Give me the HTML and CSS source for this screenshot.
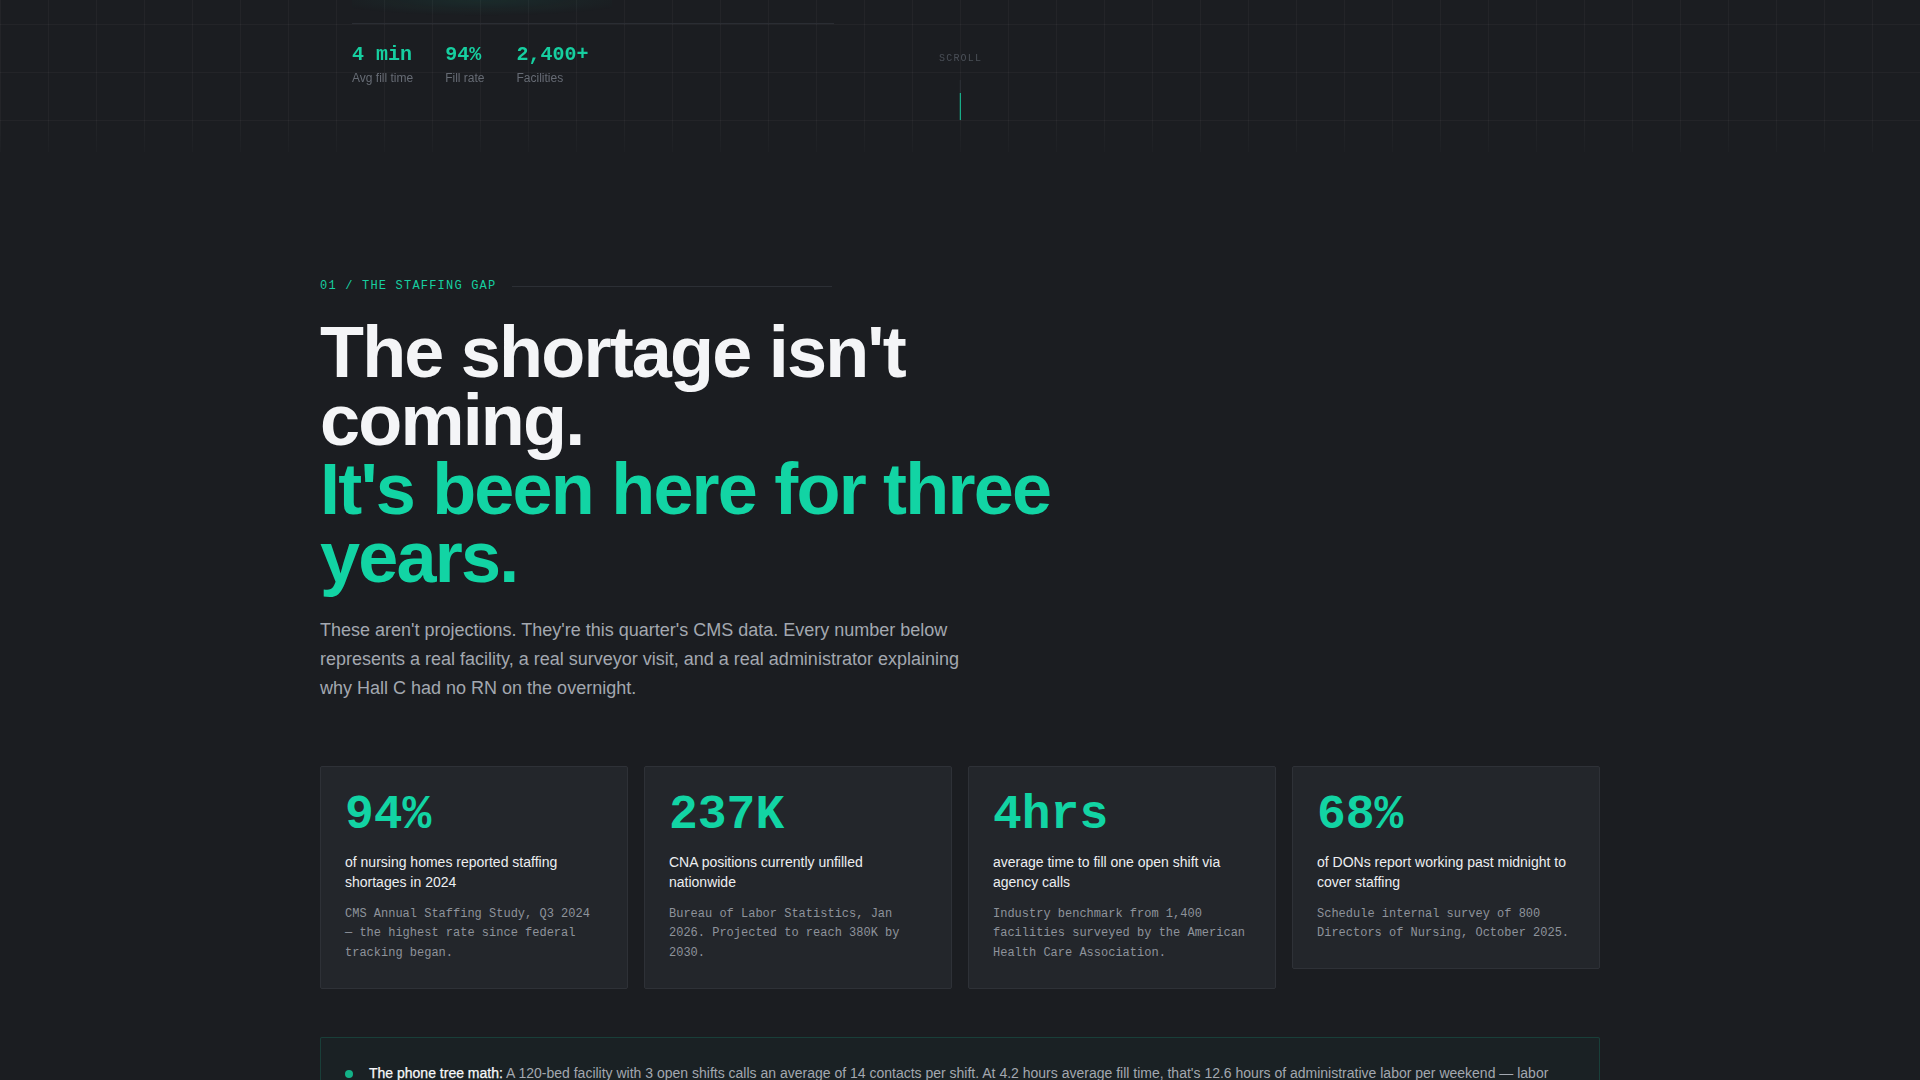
FILE: index.html
```html
<!DOCTYPE html>
<html lang="en">
<head>
<meta charset="utf-8">
<title>The Staffing Gap</title>
<link rel="stylesheet" href="styles.css">
</head>
<body>
<header class="hero-tail">
  <div class="hero-glow"></div>
  <div class="hero-inner">
    <div class="hero-stats">
      <div class="stat">
        <div class="stat-value">4 min</div>
        <div class="stat-label">Avg fill time</div>
      </div>
      <div class="stat">
        <div class="stat-value">94%</div>
        <div class="stat-label">Fill rate</div>
      </div>
      <div class="stat">
        <div class="stat-value">2,400+</div>
        <div class="stat-label">Facilities</div>
      </div>
    </div>
  </div>
  <div class="scroll-ind">
    <span class="scroll-text">SCROLL</span>
    <span class="scroll-line"></span>
  </div>
</header>

<main class="section">
  <div class="container">
    <div class="eyebrow">
      <span class="eyebrow-text">01 / THE STAFFING GAP</span>
      <span class="eyebrow-line"></span>
    </div>
    <h1 class="headline">The shortage isn't coming.<span class="accent">It's been here for three years.</span></h1>
    <p class="lead">These aren't projections. They're this quarter's CMS data. Every number below represents a real facility, a real surveyor visit, and a real administrator explaining why Hall C had no RN on the overnight.</p>

    <div class="cards">
      <div class="card">
        <div class="card-num">94%</div>
        <div class="card-desc">of nursing homes reported staffing shortages in 2024</div>
        <div class="card-src">CMS Annual Staffing Study, Q3 2024 — the highest rate since federal tracking began.</div>
      </div>
      <div class="card">
        <div class="card-num">237K</div>
        <div class="card-desc">CNA positions currently unfilled nationwide</div>
        <div class="card-src">Bureau of Labor Statistics, Jan 2026. Projected to reach 380K by 2030.</div>
      </div>
      <div class="card">
        <div class="card-num">4hrs</div>
        <div class="card-desc">average time to fill one open shift via agency calls</div>
        <div class="card-src">Industry benchmark from 1,400 facilities surveyed by the American Health Care Association.</div>
      </div>
      <div class="card">
        <div class="card-num">68%</div>
        <div class="card-desc">of DONs report working past midnight to cover staffing</div>
        <div class="card-src">Schedule internal survey of 800 Directors of Nursing, October 2025.</div>
      </div>
    </div>

    <div class="callout">
      <div class="callout-item">
        <span class="bullet"></span>
        <p class="callout-text"><strong>The phone tree math:</strong> A 120-bed facility with 3 open shifts calls an average of 14 contacts per shift. At 4.2 hours average fill time, that's 12.6 hours of administrative labor per weekend — labor that never reaches a resident's bedside.</p>
      </div>
    </div>
  </div>
</main>
</body>
</html>
```

FILE: styles.css
```css
* { box-sizing: border-box; }

html, body {
  margin: 0;
  padding: 0;
}

body {
  background: #1b1d21;
  color: #f3f4f6;
  font-family: "Liberation Sans", Arial, sans-serif;
}

/* ---------- hero tail ---------- */
.hero-tail {
  position: relative;
  height: 152px;
  background-image:
    linear-gradient(to right, rgba(255,255,255,0.035) 1px, transparent 1px),
    linear-gradient(to bottom, rgba(255,255,255,0.035) 1px, transparent 1px);
  background-size: 48px 48px, 48px 48px;
  background-position: 0 0, 0 24px;
  -webkit-mask-image: linear-gradient(to bottom, #000 80%, rgba(0,0,0,0.4) 100%);
  mask-image: linear-gradient(to bottom, #000 80%, rgba(0,0,0,0.4) 100%);
}

.hero-glow {
  position: absolute;
  top: 0;
  left: 352px;
  width: 260px;
  height: 16px;
  background: radial-gradient(ellipse 60% 100% at 50% 0%, rgba(18, 212, 164, 0.08), transparent 100%);
}

.hero-inner {
  max-width: 1280px;
  margin: 0 auto;
  padding: 23px 32px 0;
}

.hero-stats {
  width: 482px;
  border-top: 1px solid #2a2d33;
  padding-top: 19px;
  display: flex;
  gap: 32px;
}

.stat-value {
  font-family: "Liberation Mono", "Courier New", monospace;
  font-weight: 700;
  font-size: 20px;
  line-height: 24px;
  color: #16cfa0;
}

.stat-label {
  margin-top: 3px;
  font-size: 12px;
  line-height: 1.4;
  color: #666b74;
}

.scroll-ind {
  position: absolute;
  top: 53px;
  left: 50%;
  transform: translateX(-50%);
  display: flex;
  flex-direction: column;
  align-items: center;
  gap: 15px;
}

.scroll-text {
  font-family: "Liberation Mono", "Courier New", monospace;
  font-size: 10px;
  line-height: 12px;
  letter-spacing: 0.12em;
  color: #4a4f57;
  padding-left: 0.12em;
}

.scroll-line {
  display: block;
  width: 1px;
  height: 40px;
  background: linear-gradient(to bottom, #2c3036 0, #2c3036 13px, #16cfa0 13px, #16cfa0 100%);
}

/* ---------- section ---------- */
.section {
  padding-top: 125px;
}

.container {
  max-width: 1280px;
  margin: 0 auto;
}

.eyebrow {
  display: flex;
  align-items: center;
  gap: 16px;
}

.eyebrow-text {
  font-family: "Liberation Mono", "Courier New", monospace;
  font-size: 12px;
  line-height: 18px;
  letter-spacing: 0.1em;
  color: #16cfa0;
}

.eyebrow-line {
  width: 320px;
  height: 1px;
  background: #2c2f35;
}

.headline {
  margin: 23px 0 0;
  max-width: 820px;
  font-size: 72px;
  line-height: 0.95;
  font-weight: 700;
  letter-spacing: -0.025em;
  color: #f4f5f7;
}

.headline .accent {
  display: block;
  color: #12d4a4;
}

.lead {
  margin: 24px 0 0;
  max-width: 640px;
  font-size: 18px;
  line-height: 1.625;
  color: #a3a8b0;
}

/* ---------- cards ---------- */
.cards {
  margin-top: 63px;
  display: grid;
  grid-template-columns: repeat(4, 1fr);
  gap: 16px;
  align-items: start;
}

.card {
  background: #23262b;
  border: 1px solid #2e3137;
  border-radius: 2px;
  padding: 24px;
}

.card-num {
  font-family: "Liberation Mono", "Courier New", monospace;
  font-weight: 700;
  font-size: 48px;
  line-height: 1;
  color: #12d4a4;
}

.card-desc {
  margin-top: 14px;
  font-size: 14px;
  line-height: 1.4;
  color: #eceef1;
}

.card-src {
  margin-top: 12px;
  font-family: "Liberation Mono", "Courier New", monospace;
  font-size: 12px;
  line-height: 1.65;
  color: #8e939b;
}

/* ---------- callout ---------- */
.callout {
  margin-top: 48px;
  border: 1px solid rgba(18, 212, 164, 0.17);
  background: rgba(18, 212, 164, 0.025);
  border-radius: 2px;
  padding: 24px;
}

.callout-item {
  display: flex;
  align-items: flex-start;
  gap: 16px;
}

.bullet {
  flex: none;
  width: 8px;
  height: 8px;
  margin-top: 8px;
  border-radius: 50%;
  background: #13b287;
}

.callout-text {
  margin: 0;
  font-size: 14px;
  line-height: 1.6;
  color: #a3a8b0;
}

.callout-text strong {
  color: #f7f8fa;
  font-weight: 400;
  -webkit-text-stroke: 0.25px #f7f8fa;
}
```
